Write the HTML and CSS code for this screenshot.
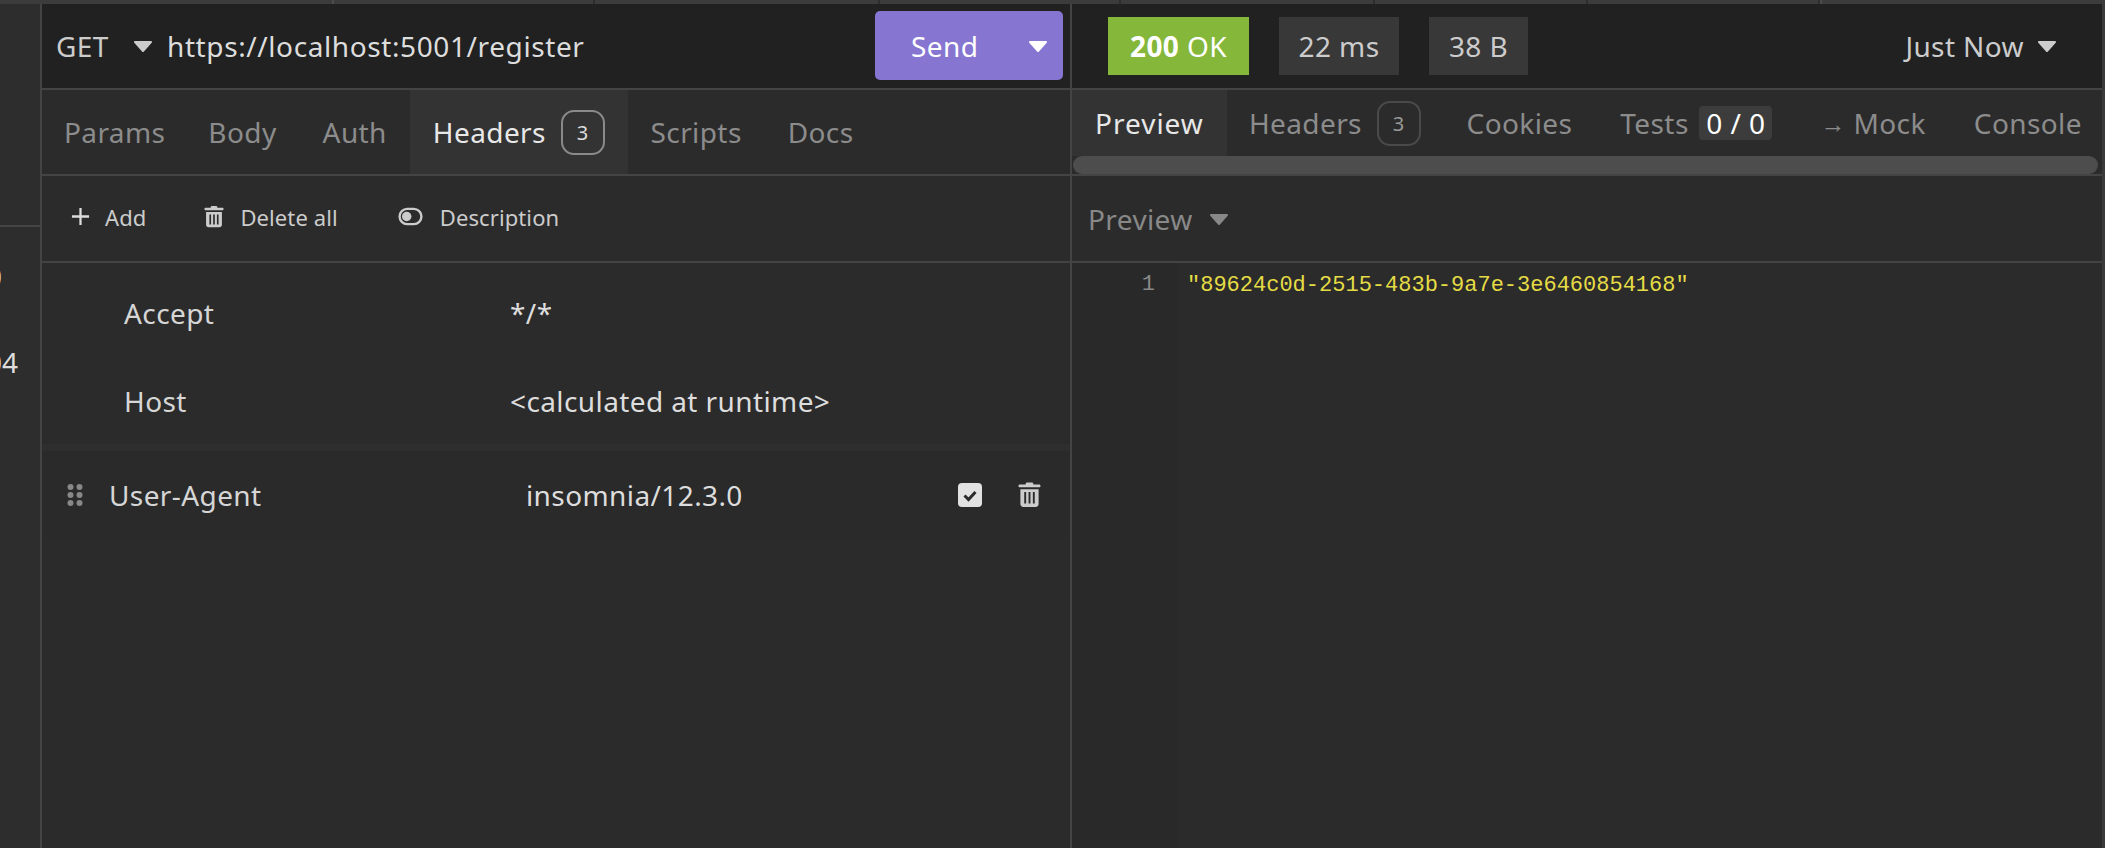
FILE: index.html
```html
<!DOCTYPE html>
<html lang="en">
<head>
<meta charset="utf-8">
<title>Insomnia</title>
<link rel="stylesheet" href="styles.css">
</head>
<body>
<div class="strip"><i></i><i></i><i></i><i></i><i></i><i></i><i></i><i></i></div>
<div class="app">
  <aside class="side">
    <div class="side-line"></div>
    <div class="frag frag-a">0</div>
    <div class="frag frag-b">04</div>
  </aside>
  <section class="pane req">
    <header class="bar req-bar">
      <span class="method">GET</span>
      <svg class="caret caret-light" viewBox="0 0 20 12"><path d="M2 2h16l-8 9z"/></svg>
      <span class="url">https://localhost:5001/register</span>
      <div class="send">
        <span class="send-label">Send</span>
        <svg class="caret caret-white" viewBox="0 0 20 12"><path d="M2 2h16l-8 9z"/></svg>
      </div>
    </header>
    <nav class="tabs req-tabs">
      <span class="tab t-params">Params</span>
      <span class="tab t-body">Body</span>
      <span class="tab t-auth">Auth</span>
      <span class="tab active t-headers">Headers <b class="count">3</b></span>
      <span class="tab t-scripts">Scripts</span>
      <span class="tab t-docs">Docs</span>
    </nav>
    <div class="actions">
      <span class="act act-add">
        <svg class="ico-plus" viewBox="0 0 20 20"><path d="M10 1v18M1 10h18"/></svg>
        Add
      </span>
      <span class="act act-del">
        <svg class="ico-trash" viewBox="0 0 24 27"><path class="fill" d="M8 3V2.500C8 1.500 9 1 10 1h4c1 0 2 .5 2 1.500V3h6c1 0 1.500.7 1.500 1.500S23 6 22 6H2C1 6 .5 5.300.5 4.500S1 3 2 3zM2.500 8h19v15.500c0 1.800-1.200 3-3 3h-13c-1.800 0-3-1.200-3-3z"/><path class="slots" d="M7.500 11v12M12 11v12M16.500 11v12"/></svg>
        Delete all
      </span>
      <span class="act act-desc">
        <svg class="ico-toggle" viewBox="0 0 26 20"><rect x="1.500" y="2" width="23" height="16" rx="8"/><circle cx="9" cy="10" r="5"/></svg>
        Description
      </span>
    </div>
    <div class="rows">
      <div class="row row-ro row-first"><span class="name">Accept</span><span class="val">*/*</span></div>
      <div class="row row-ro row-second"><span class="name">Host</span><span class="val">&lt;calculated at runtime&gt;</span></div>
      <div class="band"></div>
      <div class="row row-edit">
        <svg class="grip" viewBox="0 0 16 22"><circle cx="3.500" cy="3" r="3"/><circle cx="12.500" cy="3" r="3"/><circle cx="3.500" cy="11" r="3"/><circle cx="12.500" cy="11" r="3"/><circle cx="3.500" cy="19" r="3"/><circle cx="12.500" cy="19" r="3"/></svg>
        <span class="name">User-Agent</span>
        <span class="val">insomnia/12.3.0</span>
        <svg class="check" viewBox="0 0 24 24"><rect width="24" height="24" rx="4"/><path d="M6.500 12.500l4 4 7-7.500"/></svg>
        <svg class="ico-trash big" viewBox="0 0 24 27"><path class="fill" d="M8 3V2.500C8 1.500 9 1 10 1h4c1 0 2 .5 2 1.500V3h6c1 0 1.500.7 1.500 1.500S23 6 22 6H2C1 6 .5 5.300.5 4.500S1 3 2 3zM2.500 8h19v15.500c0 1.800-1.200 3-3 3h-13c-1.800 0-3-1.200-3-3z"/><path class="slots" d="M7.500 11v12M12 11v12M16.500 11v12"/></svg>
      </div>
    </div>
  </section>
  <section class="pane res">
    <header class="bar res-bar">
      <span class="tag tag-ok"><b>200</b> OK</span>
      <span class="tag tag-ms">22 ms</span>
      <span class="tag tag-size">38 B</span>
      <span class="when">Just Now</span>
      <svg class="caret caret-light" viewBox="0 0 20 12"><path d="M2 2h16l-8 9z"/></svg>
    </header>
    <div class="res-tabs-wrap">
      <nav class="tabs res-tabs">
        <span class="tab active r-preview">Preview</span>
        <span class="tab r-headers">Headers <b class="count dim">3</b></span>
        <span class="tab r-cookies">Cookies</span>
        <span class="tab r-tests">Tests <b class="score">0 / 0</b></span>
        <span class="tab r-mock"><small>→</small> Mock</span>
        <span class="tab r-console">Console</span>
      </nav>
      <div class="scroll"><div class="thumb"></div></div>
    </div>
    <div class="mode">
      <span>Preview</span>
      <svg class="caret caret-dim" viewBox="0 0 20 12"><path d="M2 2h16l-8 9z"/></svg>
    </div>
    <div class="code">
      <div class="gutter">1</div>
      <div class="line">"89624c0d-2515-483b-9a7e-3e6460854168"</div>
    </div>
  </section>
  <div class="edge"></div>
</div>
</body>
</html>
```
FILE: styles.css
```css
* { box-sizing: border-box; }
html, body { margin: 0; height: 100%; }
body {
  width: 2105px; height: 848px; overflow: hidden;
  background: #2b2b2b; color: #ddd;
  font-family: "Noto Sans", "Open Sans", sans-serif; font-size: 28px; font-weight: 400; letter-spacing: .4px;
  display: flex; flex-direction: column;
}
.strip { height: 4px; display: flex; background: #3c3c3c; flex: none; }
.strip i { display: block; border-right: 2px solid #4c4c4c; }
.strip i:nth-child(1) { width: 334px; }
.strip i:nth-child(2) { width: 261px; border-color: #2e2e2e; }
.strip i:nth-child(3) { width: 285px; border-color: #2e2e2e; }
.strip i:nth-child(4) { width: 241px; border-color: #2e2e2e; }
.strip i:nth-child(5) { width: 254px; border-color: #2e2e2e; }
.strip i:nth-child(6) { width: 213px; border-color: #2e2e2e; }
.strip i:nth-child(7) { width: 232px; border-color: #2e2e2e; }
.app { flex: 1; display: flex; min-height: 0; }
.side { width: 42px; flex: none; border-right: 2px solid #444; overflow: hidden; background: #2d2d2d; }
.side-line { height: 2px; background: #444; margin-top: 221px; }
.frag { white-space: nowrap; color: #ddd; line-height: 30px; letter-spacing: 0; }
.frag-a { margin: 34px 0 0 -14px; }
.frag-b { margin: 56px 0 0 -14px; }
.pane { display: flex; flex-direction: column; min-width: 0; }
.req { width: 1030px; flex: none; border-right: 2px solid #444; }
.res { flex: 1; }
.edge { width: 3px; flex: none; background: #3a3a3a; }
.bar { height: 86px; flex: none; background: #212121; border-bottom: 2px solid #444; display: flex; align-items: center; }
.req-bar { padding: 0 7px 0 14px; }
.method { color: #ccc; width: 77px; }
.caret { width: 20px; height: 12px; flex: none; }
.caret path { stroke-width: 2; stroke-linejoin: round; }
.caret-light path { fill: #ccc; stroke: #ccc; }
.caret-white path { fill: #fff; stroke: #fff; }
.caret-dim path { fill: #888; stroke: #888; }
.url { margin-left: 14px; color: #ddd; flex: 1; white-space: nowrap; letter-spacing: .6px; }
.send { width: 188px; height: 69px; background: #8675d1; border-radius: 5px; display: flex; align-items: center; color: #fff; padding: 0 15px 0 36px; justify-content: space-between; margin-bottom: 1px; }
.tabs { display: flex; align-items: stretch; }
.req-tabs { height: 86px; flex: none; border-bottom: 2px solid #444; }
.tab { color: #8c8c8c; display: flex; align-items: center; padding: 0 23px; white-space: pre; }
.tab.active { background: #333; color: #e8e8e8; }
.t-params { padding: 0 20px 0 22px; }
.count { font-weight: 400; font-size: 20px; letter-spacing: 0; border: 2px solid #8a8a8a; border-radius: 13px; width: 44px; height: 45px; display: flex; align-items: center; justify-content: center; margin-left: 7px; color: #ddd; }
.count.dim { border-color: #4a4a4a; color: #999; height: 45px; }
.actions { height: 87px; flex: none; border-bottom: 2px solid #444; display: flex; align-items: center; font-size: 22px; letter-spacing: .1px; color: #ccc; padding-left: 29px; padding-bottom: 4px; }
.act { display: flex; align-items: center; }
.ico-plus { width: 19px; height: 19px; margin-right: 15px; }
.ico-plus path { stroke: #ddd; stroke-width: 2.400; fill: none; }
.act-del { margin-left: 58px; }
.act-desc { margin-left: 60px; }
.ico-trash { width: 20px; height: 23px; margin-right: 16px; }
.ico-trash .fill { fill: #ccc; }
.ico-trash .slots { stroke: #2b2b2b; stroke-width: 2; fill: none; }
.ico-toggle { width: 25px; height: 19px; margin-right: 17px; }
.ico-toggle rect { fill: none; stroke: #ccc; stroke-width: 2.500; }
.ico-toggle circle { fill: #ccc; }
.rows { flex: 1; padding-top: 6px; }
.row { display: grid; align-items: center; }
.row-ro { grid-template-columns: 386px 1fr; padding-left: 82px; }
.row-first { height: 88px; }
.row-second { height: 87px; padding-top: 1px; }
.band { height: 7px; background: #2e2e2e; }
.row-edit { grid-template-columns: 42px 417px 432px 60px 23px; height: 87px; padding: 0 0 0 25px; background: #2a2a2a; }
.name { color: #d6d6d6; }
.val { color: #ddd; }
.grip { width: 16px; height: 22px; fill: #888; }
.check { width: 24px; height: 24px; }
.check rect { fill: #e2e2e2; }
.check path { fill: none; stroke: #2b2b2b; stroke-width: 3; }
.ico-trash.big { width: 23px; height: 27px; margin: 0; }
.res-bar { padding: 0 45px 0 36px; }
.tag { height: 58px; display: flex; align-items: center; justify-content: center; background: #383838; color: #ccc; margin-right: 30px; white-space: pre; }
.tag-ok { background: #84b73a; color: #fff; width: 141px; }
.tag-ms { width: 120px; }
.tag-size { width: 99px; }
.tag-ok b { font-weight: 700; }
.when { margin-left: auto; margin-right: 13px; color: #ccc; }
.res-tabs-wrap { height: 86px; flex: none; border-bottom: 2px solid #444; display: flex; flex-direction: column; }
.res-tabs { height: 66px; flex: none; }
.r-preview { padding-right: 23px; letter-spacing: 1px; }
.r-headers { padding-left: 22px; }
.r-tests { padding-left: 25px; }
.score { font-weight: 400; color: #fff; background: #3c3c3c; border-radius: 4px; width: 73px; height: 34px; display: flex; align-items: center; justify-content: center; margin-left: 3px; }
.r-mock { padding-left: 25px; }
.r-mock small { font-size: 25px; }
.r-console { padding-left: 25px; }
.scroll { height: 18px; padding-left: 1px; padding-right: 4px; }
.thumb { height: 18px; background: #4d4d4d; border-radius: 9px; }
.mode { height: 87px; flex: none; border-bottom: 2px solid #444; display: flex; align-items: center; padding-left: 16px; color: #888; }
.mode .caret { margin-left: 16px; }
.code { flex: 1; display: flex; font-family: "Liberation Mono", monospace; font-size: 22px; line-height: 30px; letter-spacing: 0; }
.gutter { width: 106px; background: #292929; color: #888; text-align: right; padding: 7px 23px 0 0; }
.line { color: #e5dc45; padding: 8px 0 0 9px; white-space: pre; }
```
